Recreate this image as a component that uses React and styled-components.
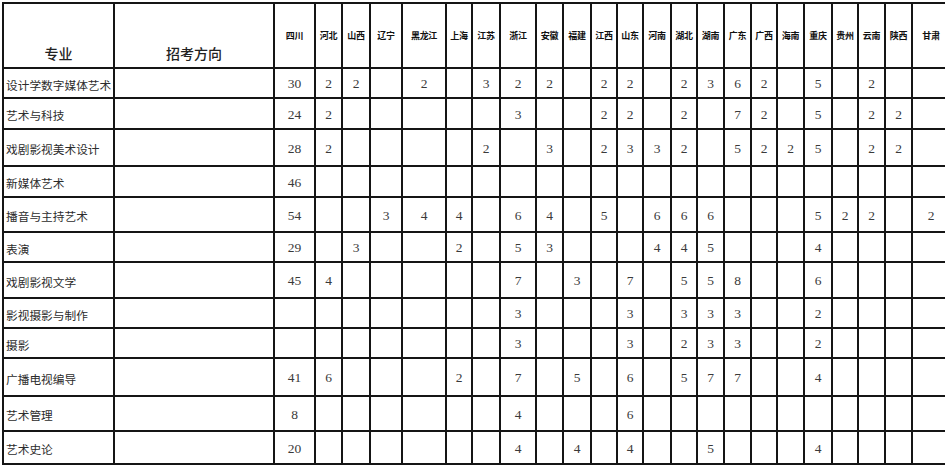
import styled, { createGlobalStyle } from "styled-components";

const Global = createGlobalStyle`
  html, body {
    margin: 0;
    padding: 0;
    background: #ffffff;
    overflow: hidden;
  }
  body {
    font-family: "Noto Sans CJK SC", "Noto Sans", sans-serif;
  }
`

const Page = styled.div`
  padding: 2px 0 0 2px;
  width: 980px;
`

const Sheet = styled.table`
  border-collapse: collapse;
  table-layout: fixed;
  width: 948px;
`

const Row = styled.tr`
  height: ${props => props.$h}px;
`

const Cell = styled.td`
  border: 2px solid #151515;
  padding: 0;
  overflow: hidden;
  white-space: nowrap;
`

const TitleHead = styled(Cell)`
  vertical-align: bottom;
  text-align: center;
  padding-bottom: 4px;
  font-size: 14px;
  color: #222;
  font-weight: 500;
`

const ProvinceHead = styled(Cell)`
  text-align: center;
  vertical-align: middle;
  font-size: 9px;
  font-weight: 700;
  color: #111;
  letter-spacing: -0.3px;
`

const MajorCell = styled(Cell)`
  text-align: left;
  vertical-align: middle;
  padding-left: 2px;
  padding-top: 2px;
  font-size: 11.7px;
  color: #2c2c2c;
`

const CountCell = styled(Cell)`
  text-align: center;
  vertical-align: middle;
  padding-top: 2px;
  font-family: "Liberation Serif", "Times New Roman", serif;
  font-size: 13.5px;
  color: #3a3a3a;
`

const widths = [111, 160, 41, 27, 28, 32, 44, 26, 28, 36, 27, 28, 26, 26, 28, 26, 27, 27, 26, 27, 28, 26, 27, 27, 38]

const provinces = ["四川", "河北", "山西", "辽宁", "黑龙江", "上海", "江苏", "浙江", "安徽", "福建", "江西", "山东", "河南", "湖北", "湖南", "广东", "广西", "海南", "重庆", "贵州", "云南", "陕西", "甘肃"]

// one entry per province, in the order above; "" = empty cell
const majors = [
  { name: "设计学数字媒体艺术", h: 30, n: ["30", "2", "2", "", "2", "", "3", "2", "2", "", "2", "2", "", "2", "3", "6", "2", "", "5", "", "2", "", ""] },
  { name: "艺术与科技", h: 31, n: ["24", "2", "", "", "", "", "", "3", "", "", "2", "2", "", "2", "", "7", "2", "", "5", "", "2", "2", ""] },
  { name: "戏剧影视美术设计", h: 37, n: ["28", "2", "", "", "", "", "2", "", "3", "", "2", "3", "3", "2", "", "5", "2", "2", "5", "", "2", "2", ""] },
  { name: "新媒体艺术", h: 31, n: ["46", "", "", "", "", "", "", "", "", "", "", "", "", "", "", "", "", "", "", "", "", "", ""] },
  { name: "播音与主持艺术", h: 35, n: ["54", "", "", "3", "4", "4", "", "6", "4", "", "5", "", "6", "6", "6", "", "", "", "5", "2", "2", "", "2"] },
  { name: "表演", h: 30, n: ["29", "", "3", "", "", "2", "", "5", "3", "", "", "", "4", "4", "5", "", "", "", "4", "", "", "", ""] },
  { name: "戏剧影视文学", h: 36, n: ["45", "4", "", "", "", "", "", "7", "", "3", "", "7", "", "5", "5", "8", "", "", "6", "", "", "", ""] },
  { name: "影视摄影与制作", h: 30, n: ["", "", "", "", "", "", "", "3", "", "", "", "3", "", "3", "3", "3", "", "", "2", "", "", "", ""] },
  { name: "摄影", h: 30, n: ["", "", "", "", "", "", "", "3", "", "", "", "3", "", "2", "3", "3", "", "", "2", "", "", "", ""] },
  { name: "广播电视编导", h: 38, n: ["41", "6", "", "", "", "2", "", "7", "", "5", "", "6", "", "5", "7", "7", "", "", "4", "", "", "", ""] },
  { name: "艺术管理", h: 35, n: ["8", "", "", "", "", "", "", "4", "", "", "", "6", "", "", "", "", "", "", "", "", "", "", ""] },
  { name: "艺术史论", h: 33, n: ["20", "", "", "", "", "", "", "4", "", "4", "", "4", "", "", "5", "", "", "", "4", "", "", "", ""] },
]

const App = () => {
  return (
    <>
      <Global />
      <Page>
        <Sheet>
          <colgroup>
            {widths.map((w, i) => <col key={i} style={{ width: w }} />)}
          </colgroup>
          <tbody>
            <Row $h={65}>
              <TitleHead>专业</TitleHead>
              <TitleHead>招考方向</TitleHead>
              {provinces.map(p => <ProvinceHead key={p}>{p}</ProvinceHead>)}
            </Row>
            {majors.map(m => (
              <Row $h={m.h} key={m.name}>
                <MajorCell>{m.name}</MajorCell>
                <MajorCell />
                {m.n.map((v, i) => <CountCell key={i}>{v}</CountCell>)}
              </Row>
            ))}
          </tbody>
        </Sheet>
      </Page>
    </>
  )
}

export default App;
